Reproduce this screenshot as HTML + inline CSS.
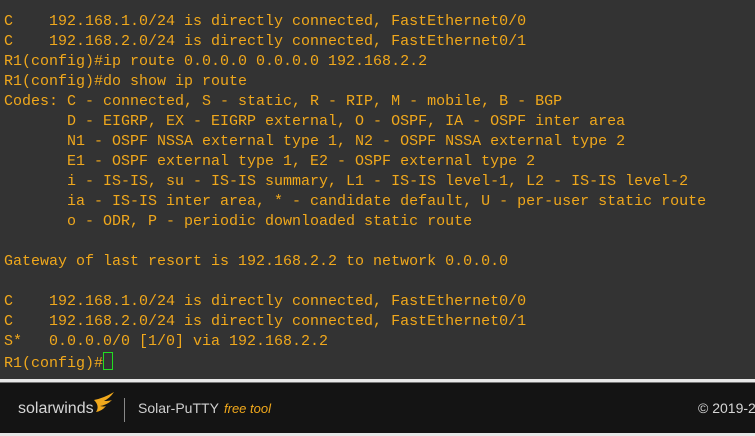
<!DOCTYPE html>
<html><head><style>
html,body{margin:0;padding:0;width:755px;height:436px;overflow:hidden;background:#e6e6e6}
.term{position:absolute;left:0;top:0;width:755px;height:379px;background:#333333}
pre{margin:0;position:absolute;left:4px;top:12px;font-family:"Liberation Mono",monospace;font-size:15px;line-height:20px;color:#f0a81c;letter-spacing:0}
.cur{display:inline-block;width:8px;height:16px;border:1px solid #22dd22;vertical-align:-3px}
.sep{position:absolute;left:0;top:379px;width:755px;height:3px;background:#e8e8e8;border-bottom:1px solid #777}
.foot{position:absolute;left:0;top:383px;width:755px;height:50px;background:#141414;font-family:"Liberation Sans",sans-serif}
.sw{position:absolute;left:18px;top:17px;color:#d6d6d6;font-size:16px;letter-spacing:0}
.bar{position:absolute;left:124px;top:15px;width:1px;height:24px;background:#888}
.sp{position:absolute;left:138px;top:17px;color:#cfcfcf;font-size:14px}
.ft{position:absolute;left:224px;top:18px;color:#f0a81c;font-size:13px;font-style:italic}
.cp{position:absolute;left:698px;top:17px;color:#d6d6d6;font-size:14px;white-space:nowrap}
</style></head><body>
<div class="term"><pre>C    192.168.1.0/24 is directly connected, FastEthernet0/0
C    192.168.2.0/24 is directly connected, FastEthernet0/1
R1(config)#ip route 0.0.0.0 0.0.0.0 192.168.2.2
R1(config)#do show ip route
Codes: C - connected, S - static, R - RIP, M - mobile, B - BGP
       D - EIGRP, EX - EIGRP external, O - OSPF, IA - OSPF inter area
       N1 - OSPF NSSA external type 1, N2 - OSPF NSSA external type 2
       E1 - OSPF external type 1, E2 - OSPF external type 2
       i - IS-IS, su - IS-IS summary, L1 - IS-IS level-1, L2 - IS-IS level-2
       ia - IS-IS inter area, * - candidate default, U - per-user static route
       o - ODR, P - periodic downloaded static route

Gateway of last resort is 192.168.2.2 to network 0.0.0.0

C    192.168.1.0/24 is directly connected, FastEthernet0/0
C    192.168.2.0/24 is directly connected, FastEthernet0/1
S*   0.0.0.0/0 [1/0] via 192.168.2.2
R1(config)#<span class="cur"></span></pre></div>
<div class="sep"></div>
<div class="foot">
<div class="sw">solarwinds</div>
<svg style="position:absolute;left:92px;top:9px" width="24" height="22" viewBox="0 0 24 22"><path d="M2 8 Q12 6 22 0 Q18 6 12 9 Q17 9 20 8 Q15 13 8 14 Q12 15 14 14 Q10 19 4 20 Q8 14 2 8Z" fill="#f0a81c"/></svg>
<div class="bar"></div>
<div class="sp">Solar-PuTTY</div>
<div class="ft">free tool</div>
<div class="cp">© 2019-2</div>
</div>
</body></html>
